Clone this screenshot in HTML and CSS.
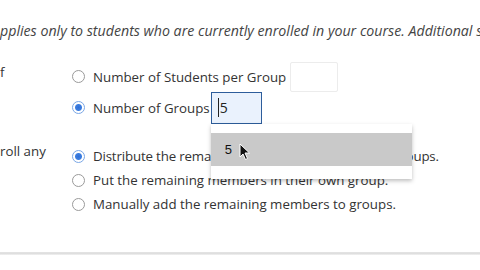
FILE: index.html
```html
<!DOCTYPE html>
<html lang="en">
  <head>
    <meta charset="UTF-8" />
    <title>Group Set</title>
    <link rel="stylesheet" href="styles.css">
  </head>
  <body>
    <p class="note">pplies only to students who are currently enrolled in your course. Additional students</p>

    <div class="section first">
      <div class="label">f</div>
      <div class="options">
        <div class="option tall">
          <span class="radio"></span>
          <span>Number of Students per Group</span>
          <span class="field"></span>
        </div>
        <div class="option tall">
          <span class="radio checked"></span>
          <span>Number of Groups</span>
          <span class="field active">
            <span class="caret"></span>5
            <!-- open number list -->
            <span class="dropdown">
              <span class="dropdown-item">5</span>
            </span>
            <svg class="pointer" width="12" height="18" viewBox="0 0 12 18">
              <path d="M1 1 L1 14 L4 11 L6.5 16.5 L8.5 15.5 L6 10 L10.5 10 Z" fill="#111" stroke="#fff" stroke-width="1" />
            </svg>
          </span>
        </div>
      </div>
    </div>

    <div class="section">
      <div class="label">roll any</div>
      <div class="options">
        <div class="option">
          <span class="radio checked"></span>
          <span class="tight">Distribute the remaining members evenly among groups.</span>
        </div>
        <div class="option">
          <span class="radio"></span>
          <span>Put the remaining members in their own group.</span>
        </div>
        <div class="option">
          <span class="radio"></span>
          <span>Manually add the remaining members to groups.</span>
        </div>
      </div>
    </div>

    <div class="divider"></div>
  </body>
</html>
```

FILE: styles.css
```css
body {
  font-family: "Open Sans", sans-serif;
  font-size: 13.3px;
  color: #333;
  margin: 0;
  padding: 0;
  width: 480px;
  height: 270px;
  overflow: hidden;
  background-color: #fff;
}

.note {
  margin: 0;
  padding-top: 21px;
  line-height: 19px;
  font-size: 14.2px;
  font-style: italic;
  color: #444;
  white-space: nowrap;
  overflow: hidden;
}

.section {
  display: flex;
  margin-top: 21px;
}

.section.first {
  margin-top: 21px;
}

.label {
  width: 72px;
  flex-shrink: 0;
  line-height: 18px;
  margin-top: -2px;
  color: #333;
}

.section.first .label {
  margin-top: 2px;
}

.options {
  display: flex;
  flex-direction: column;
}

.option {
  display: flex;
  align-items: center;
  height: 24px;
  white-space: nowrap;
}

.option.tall {
  height: 31px;
}

.tight {
  letter-spacing: -0.16px;
}

.radio {
  width: 11px;
  height: 11px;
  border: 1px solid #9a9a9a;
  border-radius: 50%;
  margin-right: 8px;
  box-sizing: content-box;
  background-color: #fff;
}

.radio.checked {
  border-color: #7aa7e6;
  background: radial-gradient(circle, #2f6fd6 0, #3d7ee0 3px, #fff 4px);
}

.field {
  display: flex;
  align-items: center;
  width: 46px;
  height: 28px;
  margin-left: 4px;
  border: 1px solid #ececec;
  border-radius: 2px;
  font-size: 14px;
  color: #222;
}

.field.active {
  position: relative;
  margin-left: 1px;
  width: 43px;
  height: 30px;
  border: 1px solid #2d5d9b;
  border-radius: 0;
  background-color: #eaf2fd;
  padding-left: 6px;
}

.caret {
  width: 1px;
  height: 19px;
  background-color: #222;
  margin-right: 1px;
}

.dropdown {
  position: absolute;
  left: -1px;
  top: 31px;
  width: 201px;
  padding: 9px 0 13px;
  background-color: #fff;
  box-shadow: 0 2px 4px rgba(0, 0, 0, 0.25);
  z-index: 2;
}

.dropdown-item {
  display: block;
  height: 33px;
  line-height: 33px;
  padding-left: 14px;
  background-color: #c9c9c9;
  font-family: "Liberation Sans", Arial, sans-serif;
  font-size: 13px;
  color: #111;
}

.pointer {
  position: absolute;
  left: 27px;
  top: 50px;
  z-index: 3;
  filter: blur(0.4px);
}

.divider {
  margin-top: 36px;
  height: 2px;
  border-top: 1px solid #e2e2e2;
  background: linear-gradient(#d8d8d8, #f2f2f2);
}
```
